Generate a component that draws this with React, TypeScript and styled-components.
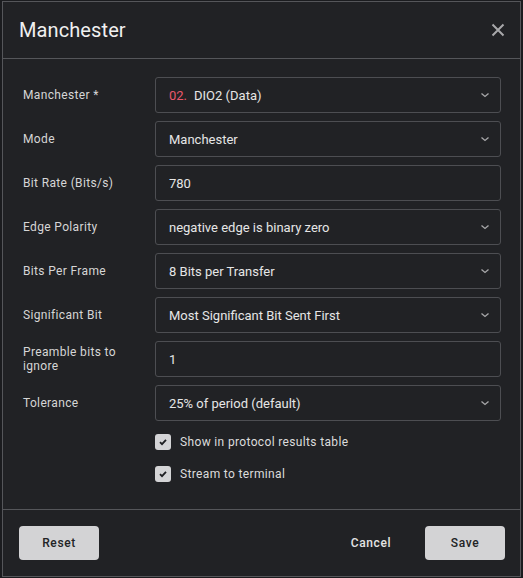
import React from 'react';
import styled, { createGlobalStyle } from 'styled-components';

const GlobalStyle = createGlobalStyle`
    html, body {
        margin: 0;
        padding: 0;
        background: #1b1c1f;
        font-family: Roboto, "Liberation Sans", sans-serif;
    }
`;

const Page = styled.div`
    padding: 1px 2px 0 2px;
`;

const Dialog = styled.div`
    width: 519px;
    height: 576px;
    box-sizing: border-box;
    background: #212225;
    border: 1px solid #55565a;
    display: flex;
    flex-direction: column;
    color: #e4e4e4;
`;

const Header = styled.div`
    height: 57px;
    box-sizing: border-box;
    border-bottom: 1px solid #55565a;
    display: flex;
    align-items: center;
    justify-content: space-between;
    padding: 0 14px 0 16px;
`;

const Title = styled.h2`
    margin: 0;
    font-size: 20px;
    font-weight: 400;
    color: #f0f0f0;
    letter-spacing: 0.1px;
`;

const CloseButton = styled.button`
    background: none;
    border: none;
    padding: 0;
    width: 16px;
    height: 16px;
    display: flex;
    align-items: center;
    justify-content: center;
    cursor: pointer;
    color: #a8a8aa;
`;

const Body = styled.div`
    flex: 1;
    padding: 18px 20px 0 20px;
    display: flex;
    flex-direction: column;
    gap: 8px;
`;

const Row = styled.div`
    display: grid;
    grid-template-columns: 132px 346px;
    align-items: center;
`;

const Label = styled.label`
    font-size: 12px;
    line-height: 14px;
    color: #d6d6d6;
    letter-spacing: 0.35px;
    padding-left: 0;
    padding-right: 16px;
`;

const Field = styled.div`
    height: 36px;
    box-sizing: border-box;
    border: 1px solid #4d4e52;
    border-radius: 3px;
    display: flex;
    align-items: center;
    padding: 0 10px 0 13px;
    font-size: 13px;
    color: #e6e6e6;
    letter-spacing: 0;
`;

const Value = styled.span`
    flex: 1;
`;

const Pin = styled.span`
    color: #e8586c;
    margin-right: 7px;
`;

const Checks = styled.div`
    display: flex;
    flex-direction: column;
    gap: 16px;
    padding: 5px 0 0 132px;
`;

const CheckRow = styled.label`
    display: flex;
    align-items: center;
    gap: 9px;
    font-size: 12px;
    color: #dcdcdc;
    letter-spacing: 0.35px;
`;

const Box = styled.span`
    width: 16px;
    height: 16px;
    border-radius: 3px;
    background: #d4d4d6;
    display: flex;
    align-items: center;
    justify-content: center;
`;

const Footer = styled.div`
    height: 67px;
    box-sizing: border-box;
    border-top: 1px solid #55565a;
    display: flex;
    align-items: center;
    gap: 14px;
    padding: 0 15px 0 16px;
`;

const Button = styled.button<{ $flat?: boolean }>`
    width: 80px;
    height: 34px;
    border: none;
    border-radius: 4px;
    background: ${p => (p.$flat ? 'transparent' : '#d3d3d5')};
    color: ${p => (p.$flat ? '#e4e4e4' : '#222326')};
    font-family: Roboto, "Liberation Sans", sans-serif;
    font-size: 12px;
    font-weight: 500;
    letter-spacing: 0.6px;
    cursor: pointer;
`;

const Spacer = styled.div`
    flex: 1;
`;

const Chevron = () => (
    <svg width="10" height="10" viewBox="0 0 10 10" fill="none">
        <path d="M1.5 3.5 L5 6.5 L8.5 3.5" stroke="#a8a8aa" strokeWidth="1.3" />
    </svg>
);

const Check = () => (
    <svg width="10" height="10" viewBox="0 0 10 10" fill="none">
        <path d="M2 5.2 L4 7.2 L8 2.8" stroke="#1d1e21" strokeWidth="1.8" />
    </svg>
);

type FieldRow = { label: string; value: string; select?: boolean; pin?: string };

const rows: FieldRow[] = [
    { label: 'Manchester *', value: 'DIO2 (Data)', select: true, pin: '02.' },
    { label: 'Mode', value: 'Manchester', select: true },
    { label: 'Bit Rate (Bits/s)', value: '780' },
    { label: 'Edge Polarity', value: 'negative edge is binary zero', select: true },
    { label: 'Bits Per Frame', value: '8 Bits per Transfer', select: true },
    { label: 'Significant Bit', value: 'Most Significant Bit Sent First', select: true },
    { label: 'Preamble bits to ignore', value: '1' },
    { label: 'Tolerance', value: '25% of period (default)', select: true },
];

export default function App() {
    return (
        <Page>
            <GlobalStyle />
            <Dialog>
                <Header>
                    <Title>Manchester</Title>
                    <CloseButton aria-label="Close">
                        <svg width="14" height="14" viewBox="0 0 14 14">
                            <path d="M1.5 1.5 L12.5 12.5 M12.5 1.5 L1.5 12.5" stroke="#a8a8aa" strokeWidth="2" />
                        </svg>
                    </CloseButton>
                </Header>
                <Body>
                    {rows.map(r => (
                        <Row key={r.label}>
                            <Label>{r.label}</Label>
                            <Field>
                                <Value>
                                    {r.pin && <Pin>{r.pin}</Pin>}
                                    {r.value}
                                </Value>
                                {r.select && <Chevron />}
                            </Field>
                        </Row>
                    ))}
                    <Checks>
                        <CheckRow><Box><Check /></Box>Show in protocol results table</CheckRow>
                        <CheckRow><Box><Check /></Box>Stream to terminal</CheckRow>
                    </Checks>
                </Body>
                <Footer>
                    <Button>Reset</Button>
                    <Spacer />
                    <Button $flat>Cancel</Button>
                    <Button>Save</Button>
                </Footer>
            </Dialog>
        </Page>
    );
}
